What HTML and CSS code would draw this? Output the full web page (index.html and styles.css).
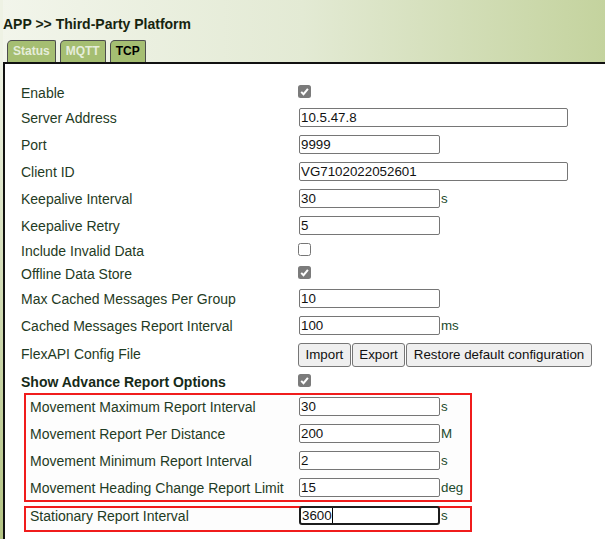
FILE: index.html
```html
<!DOCTYPE html>
<html>
<head>
<meta charset="utf-8">
<title>Third-Party Platform</title>
<link rel="stylesheet" href="styles.css">
</head>
<body>
<div class="page">
  <h1 class="title">APP &gt;&gt; Third-Party Platform</h1>
  <div class="tabs">
    <span class="tab">Status</span>
    <span class="tab">MQTT</span>
    <span class="tab active">TCP</span>
  </div>
  <div class="panel">
    <div class="form">
      <div class="row check"><span class="label">Enable</span><span class="ctrl"><svg class="cb" width="13" height="13" viewBox="0 0 13 13"><rect x="0" y="0" width="13" height="13" rx="2.5" fill="#7b7b7b"/><path d="M3.2 6.9 L5.5 9.2 L9.9 3.9" fill="none" stroke="#fff" stroke-width="2"/></svg></span></div>
      <div class="row field"><span class="label">Server Address</span><span class="ctrl"><input class="inp wide" type="text" value="10.5.47.8"></span></div>
      <div class="row field"><span class="label">Port</span><span class="ctrl"><input class="inp" type="text" value="9999"></span></div>
      <div class="row field"><span class="label">Client ID</span><span class="ctrl"><input class="inp wide" type="text" value="VG7102022052601"></span></div>
      <div class="row field"><span class="label">Keepalive Interval</span><span class="ctrl"><input class="inp" type="text" value="30"><span class="unit">s</span></span></div>
      <div class="row field"><span class="label">Keepalive Retry</span><span class="ctrl"><input class="inp" type="text" value="5"></span></div>
      <div class="row check"><span class="label">Include Invalid Data</span><span class="ctrl"><svg class="cb" width="13" height="13" viewBox="0 0 13 13"><rect x="0.5" y="0.5" width="12" height="12" rx="2" fill="#fff" stroke="#767676"/></svg></span></div>
      <div class="row check"><span class="label">Offline Data Store</span><span class="ctrl"><svg class="cb" width="13" height="13" viewBox="0 0 13 13"><rect x="0" y="0" width="13" height="13" rx="2.5" fill="#7b7b7b"/><path d="M3.2 6.9 L5.5 9.2 L9.9 3.9" fill="none" stroke="#fff" stroke-width="2"/></svg></span></div>
      <div class="row field"><span class="label">Max Cached Messages Per Group</span><span class="ctrl"><input class="inp" type="text" value="10"></span></div>
      <div class="row field"><span class="label">Cached Messages Report Interval</span><span class="ctrl"><input class="inp" type="text" value="100"><span class="unit">ms</span></span></div>
      <div class="row buttons"><span class="label">FlexAPI Config File</span><span class="ctrl btns"><button class="btn" type="button">Import</button><button class="btn" type="button">Export</button><button class="btn" type="button">Restore default configuration</button></span></div>
      <div class="row show"><span class="label bold">Show Advance Report Options</span><span class="ctrl"><svg class="cb" width="13" height="13" viewBox="0 0 13 13"><rect x="0" y="0" width="13" height="13" rx="2.5" fill="#7b7b7b"/><path d="M3.2 6.9 L5.5 9.2 L9.9 3.9" fill="none" stroke="#fff" stroke-width="2"/></svg></span></div>

      <div class="box">
        <div class="row field"><span class="label">Movement Maximum Report Interval</span><span class="ctrl"><input class="inp" type="text" value="30"><span class="unit">s</span></span></div>
        <div class="row field"><span class="label">Movement Report Per Distance</span><span class="ctrl"><input class="inp" type="text" value="200"><span class="unit">M</span></span></div>
        <div class="row field"><span class="label">Movement Minimum Report Interval</span><span class="ctrl"><input class="inp" type="text" value="2"><span class="unit">s</span></span></div>
        <div class="row field"><span class="label">Movement Heading Change Report Limit</span><span class="ctrl"><input class="inp" type="text" value="15"><span class="unit">deg</span></span></div>
      </div>
      <div class="box second">
        <div class="row field"><span class="label">Stationary Report Interval</span><span class="ctrl"><span class="inp focus"><span class="val">3600</span><span class="caret"></span></span><span class="unit">s</span></span></div>
      </div>
    </div>
  </div>
</div>
</body>
</html>
```

FILE: styles.css
```css
html, body {
  margin: 0;
  padding: 0;
}

body {
  width: 605px;
  height: 539px;
  overflow: hidden;
  font-family: "Liberation Sans", Arial, sans-serif;
  background:
    linear-gradient(180deg, #eef2e4 60px, #b4c484 539px) 0 0 / 3px 100% no-repeat,
    linear-gradient(90deg, #f2f5eb 0%, #e3ead4 50%, #c4d39e 100%);
}

.page {
  padding-left: 3px;
}

.title {
  margin: 0;
  padding-top: 16px;
  font-size: 14px;
  line-height: 16px;
  font-weight: bold;
  color: #16240f;
}

.tabs {
  display: flex;
  gap: 4px;
  margin-top: 8px;
  padding-left: 4px;
  height: 22px;
}

.tab {
  box-sizing: border-box;
  height: 22px;
  padding: 0 5px;
  border: 1px solid #4d4d4d;
  border-bottom: none;
  border-radius: 5px 2px 0 0;
  background: #a5be72;
  font-size: 12px;
  font-weight: bold;
  line-height: 21px;
  color: #e6eddb;
}

.tab.active {
  color: #000;
}

.panel {
  border-top: 2px solid #111;
  border-left: 2px solid #111;
  background: #fff;
  padding: 19px 0 0 16px;
  height: 480px;
}

.form {
  display: flex;
  flex-direction: column;
}

.row {
  box-sizing: border-box;
  display: grid;
  grid-template-columns: 277px auto;
  align-items: start;
  padding-top: 2px;
}

.row.check { height: 23px; }
.row.field { height: 27px; }
.row.buttons { height: 31px; }
.row.show { height: 21px; }

.label {
  font-size: 14px;
  line-height: 16px;
  color: #1f3b24;
  white-space: nowrap;
}

.row.field .label { padding-top: 2px; }
.row.buttons .label { padding-top: 3px; }

.label.bold {
  font-weight: bold;
  color: #162a18;
}

.ctrl {
  display: flex;
  align-items: baseline;
}

.cb {
  display: block;
}

.inp {
  box-sizing: border-box;
  width: 141px;
  height: 19px;
  margin: 0 0 0 1px;
  padding: 0 1px;
  border: 1px solid #767676;
  border-radius: 2px;
  background: #fff;
  font-family: "Liberation Sans", Arial, sans-serif;
  font-size: 13.33px;
  color: #111;
}

.inp.wide {
  width: 269px;
}

.unit {
  margin-left: 1px;
  font-size: 13.33px;
  color: #224a2c;
}

.btns {
  display: flex;
  gap: 1px;
}

.btn {
  box-sizing: border-box;
  height: 24px;
  margin: 0;
  padding: 0 6.5px;
  border: 1px solid #767676;
  border-radius: 3px;
  background: #efefef;
  font-family: "Liberation Sans", Arial, sans-serif;
  font-size: 13.33px;
  line-height: 16px;
  color: #111;
}

.box {
  box-sizing: border-box;
  width: 448px;
  margin-left: 3px;
  border: 2px solid #f01c1c;
  background: #fdfdfd;
}

.box .row {
  grid-template-columns: 272px auto;
}

.box .label {
  padding-left: 4px;
}

.box .row.field:last-child {
  height: 24px;
}

.box.second {
  margin-top: 4px;
}

.box.second .row.field {
  height: 22px;
  padding-top: 0;
}

.box.second .label {
  padding-top: 0;
}

.inp.focus {
  display: flex;
  align-items: center;
  margin-top: -2px;
  border: 2px solid #1c1c1c;
  border-radius: 3px;
  padding: 0 0 0 1px;
  line-height: 15px;
}

.caret {
  display: inline-block;
  width: 1px;
  height: 15px;
  background: #000;
}
```
